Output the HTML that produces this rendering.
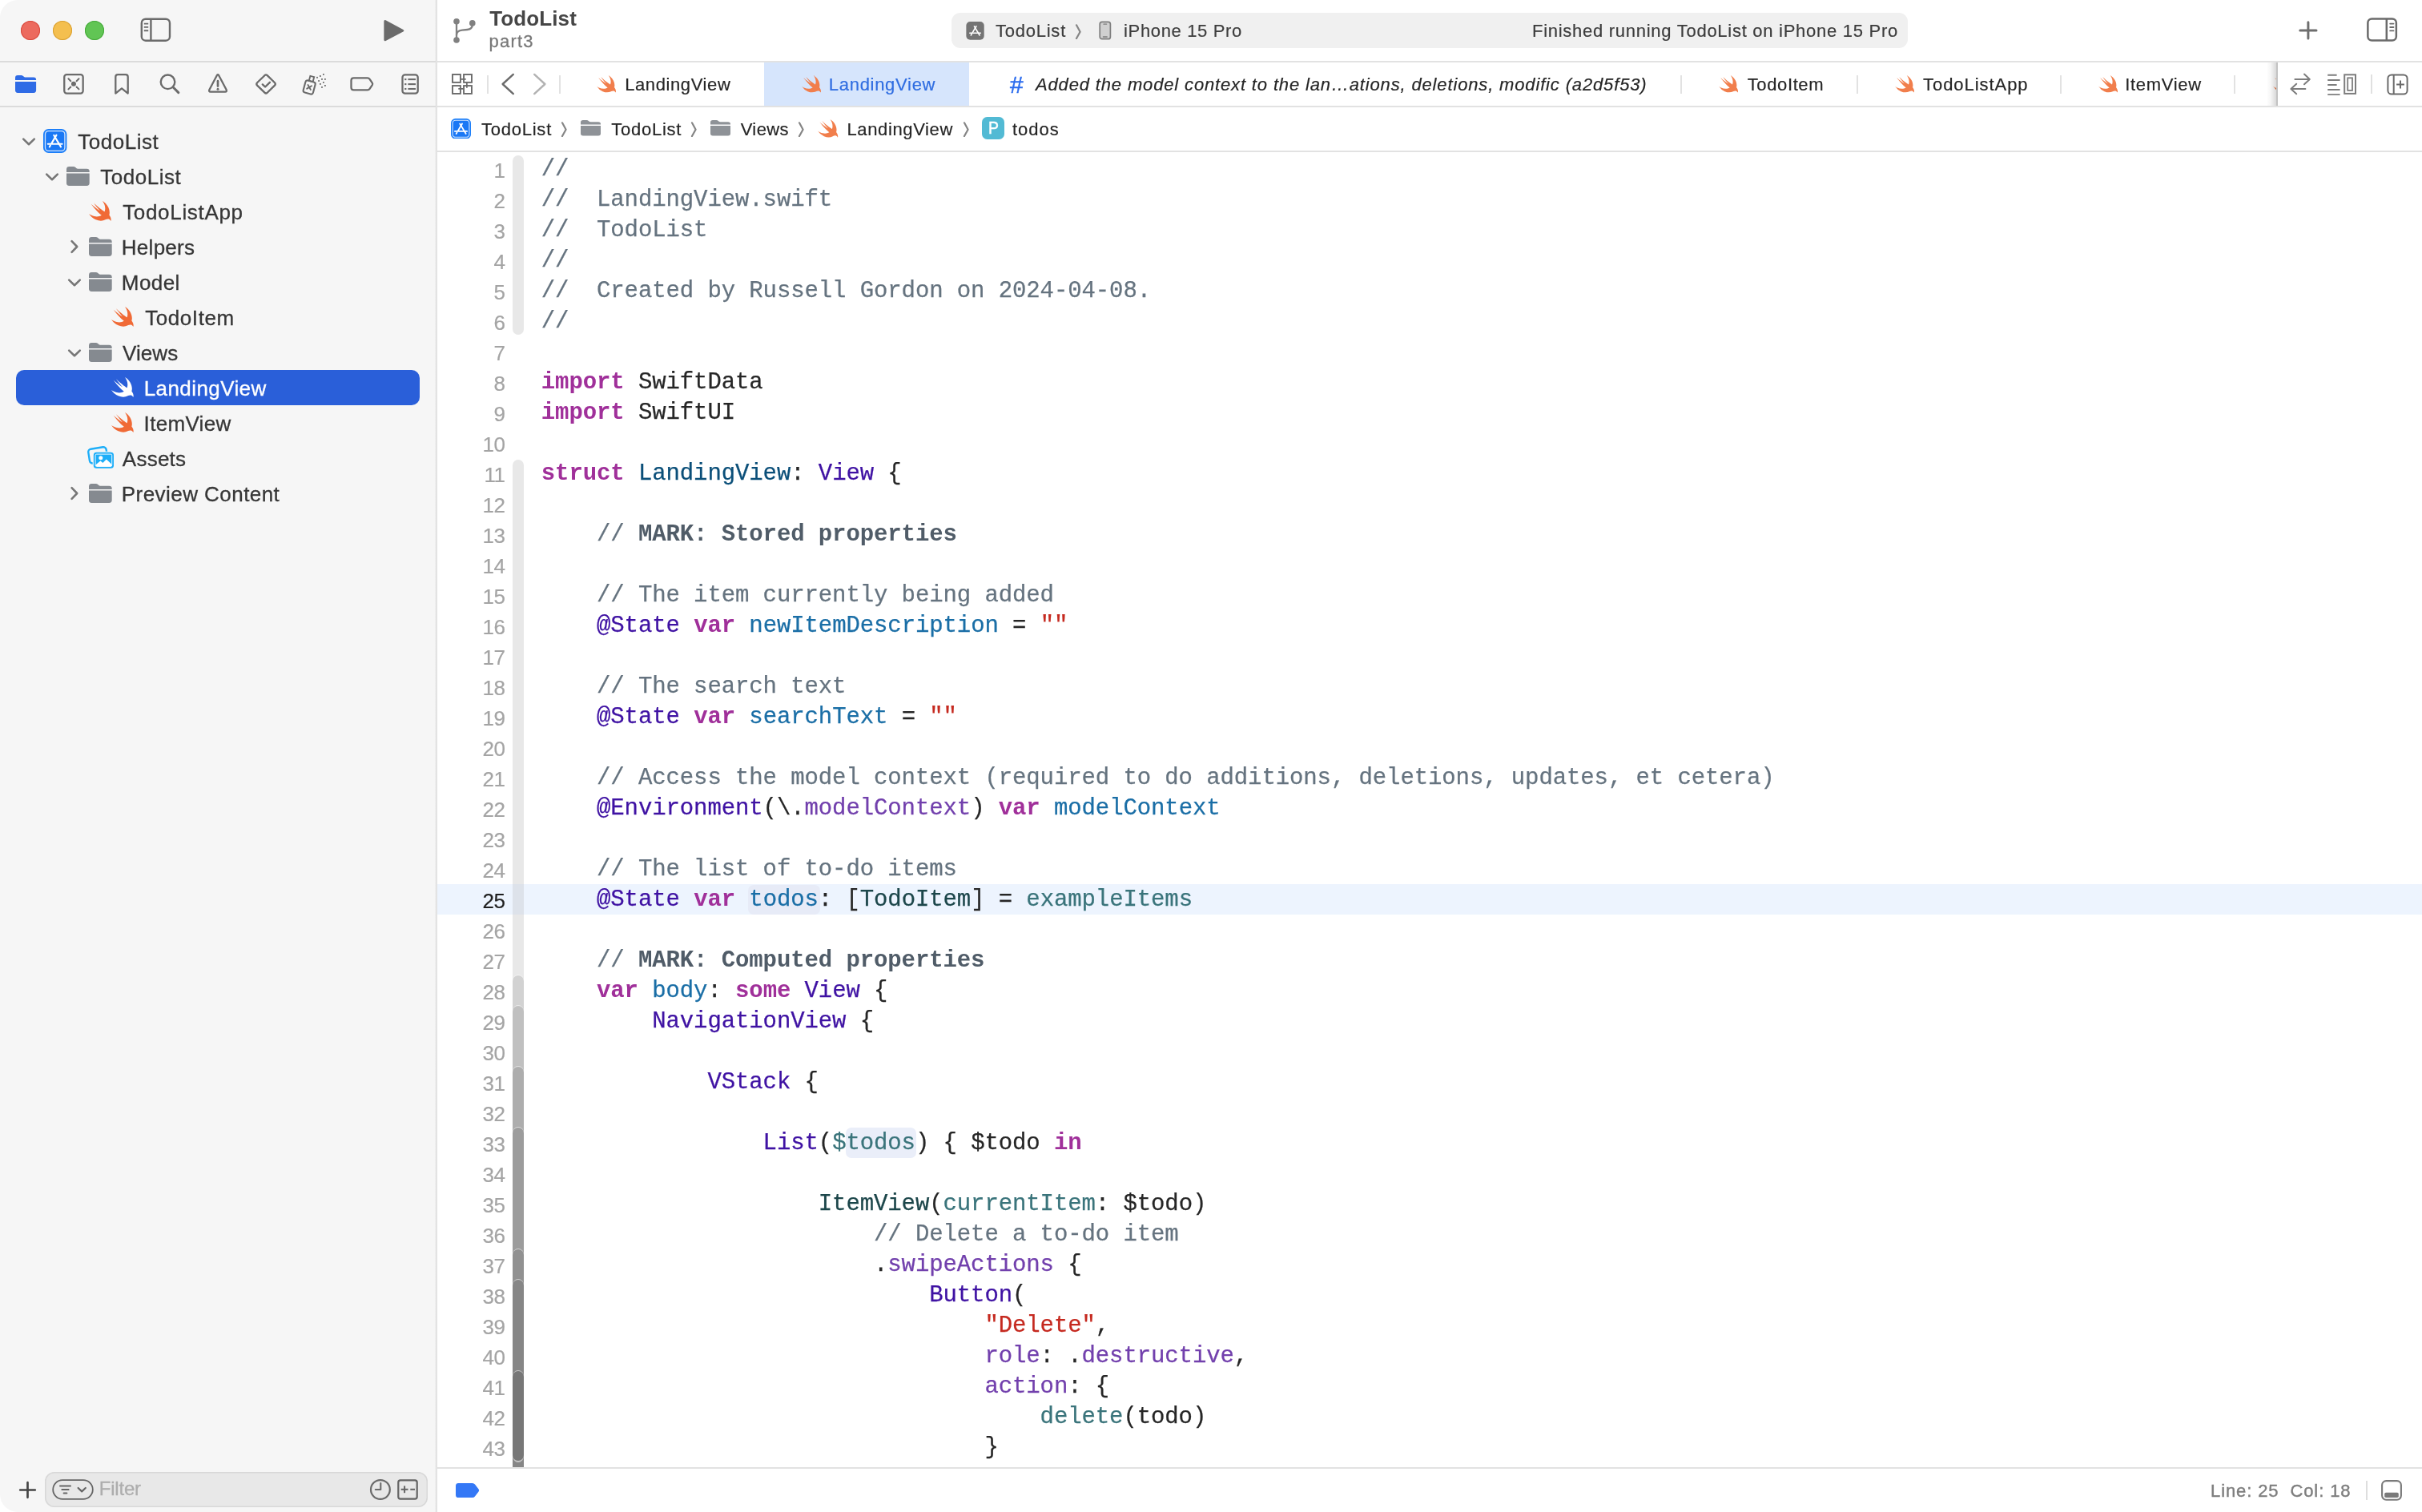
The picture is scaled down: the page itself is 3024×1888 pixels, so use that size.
<!DOCTYPE html>
<html lang="en"><head><meta charset="utf-8"><title>TodoList — LandingView.swift</title>
<style>
html,body{margin:0;padding:0;background:#fff;}
body{width:3024px;height:1888px;overflow:hidden;position:relative;font-family:"Liberation Sans",Arial,sans-serif;}
#win{will-change:transform;position:absolute;left:0;top:0;width:3024px;height:1888px;border-radius:22px;overflow:hidden;background:#fff;}
.b{position:absolute;display:block;}
.t{position:absolute;white-space:pre;}
.code{position:absolute;left:675.8px;white-space:pre;font-family:"Liberation Mono","DejaVu Sans Mono",monospace;font-size:29px;line-height:38px;height:38px;letter-spacing:-0.103px;color:#262626;-webkit-text-stroke:0.25px;}
.ln{position:absolute;left:546px;width:84.4px;text-align:right;font-size:26px;letter-spacing:-0.55px;line-height:38px;height:38px;color:#a4a4a4;-webkit-text-stroke:0.2px;}
.c{color:#65737f}.k{color:#a0309a;font-weight:bold;-webkit-text-stroke:0}.s{color:#c5291f}.td{color:#0b4f79}.d{color:#1a6ea6}
.pt{color:#1c464a}.pf{color:#3a747b}.st{color:#3f12a3}.sf{color:#7240ad}.m{color:#505c68;font-weight:bold;-webkit-text-stroke:0}
</style></head><body><div id="win">

<div class="b" style="left:0px;top:0px;width:544px;height:1888px;background:#f6f6f6;"></div>
<div class="b" style="left:543px;top:0px;width:3px;height:1888px;background:linear-gradient(to right,#f3f3f3 0%,#e6e6e6 45%,#dddddd 100%);"></div>
<div class="b" style="left:0px;top:76px;width:543.6px;height:2px;background:#dbdbdb;"></div>
<div class="b" style="left:0px;top:132px;width:543.6px;height:2px;background:#dbdbdb;"></div>
<div class="b" style="left:546px;top:76px;width:2478px;height:2px;background:#e2e2e2;"></div>
<div class="b" style="left:546px;top:132px;width:2478px;height:2px;background:#e2e2e2;"></div>
<div class="b" style="left:546px;top:188px;width:2478px;height:2px;background:#e2e2e2;"></div>
<div class="b" style="left:546px;top:1832px;width:2478px;height:2px;background:#e2e2e2;"></div>
<div class="b" style="left:26px;top:26px;width:24px;height:24px;background:#ec6a5e;border-radius:50%;box-shadow:inset 0 0 0 1px #d8493d;"></div>
<div class="b" style="left:66px;top:26px;width:24px;height:24px;background:#f4bf4f;border-radius:50%;box-shadow:inset 0 0 0 1px #d9a033;"></div>
<div class="b" style="left:106px;top:26px;width:24px;height:24px;background:#61c554;border-radius:50%;box-shadow:inset 0 0 0 1px #45a93a;"></div>
<svg class="b" style="left:173px;top:20px;" width="43" height="34" viewBox="173 20 43 34"><rect x="176.8" y="23.7" width="35.2" height="27" rx="5" fill="none" stroke="#6b6b6b" stroke-width="2.4"/>
<line x1="188.4" y1="23.7" x2="188.4" y2="50.7" stroke="#6b6b6b" stroke-width="2.4"/>
<g stroke="#6b6b6b" stroke-width="1.9" stroke-linecap="butt"><line x1="179.8" y1="29.6" x2="185.2" y2="29.6"/><line x1="179.8" y1="33.9" x2="185.2" y2="33.9"/><line x1="179.8" y1="38.2" x2="185.2" y2="38.2"/></g></svg>
<svg class="b" style="left:476px;top:21px;" width="32" height="34" viewBox="476 21 32 34"><path d="M481.6 25.2 L503.4 36.9 Q505.4 38.15 503.4 39.4 L481.6 51.1 Q479.4 52 479.4 49.6 L479.4 26.7 Q479.4 24.3 481.6 25.2 Z" fill="#6b6b6b"/></svg>
<svg class="b" style="left:17px;top:92px;" width="31" height="26" viewBox="17 92 31 26"><path d="M19 97.2 Q19 94.1 22.1 94.1 L26.4 94.1 Q27.8 94.1 28.9 95 L30.2 96 Q30.9 96.5 32 96.5 L42 96.5 Q45.1 96.5 45.1 99.5 L45.1 100 L19 100 Z" fill="#2f6be6"/>
<path d="M19 102 L45.1 102 L45.1 112.8 Q45.1 115.9 42 115.9 L22.1 115.9 Q19 115.9 19 112.8 Z" fill="#2f6be6"/></svg>
<svg class="b" style="left:77px;top:90px;" width="30" height="30" viewBox="77 90 30 30"><rect x="80.25" y="93.15" width="23.4" height="23.4" rx="3" fill="none" stroke="#6b6b6b" stroke-width="2.3"/>
<g stroke="#6b6b6b" stroke-width="2" stroke-linecap="round"><line x1="85.4" y1="98.3" x2="88.3" y2="101.2"/><line x1="98.5" y1="98.3" x2="95.6" y2="101.2"/><line x1="85.4" y1="111.4" x2="88.3" y2="108.5"/><line x1="98.5" y1="111.4" x2="95.6" y2="108.5"/></g>
<circle cx="91.95" cy="104.85" r="3" fill="#6b6b6b"/></svg>
<svg class="b" style="left:141px;top:90px;" width="22" height="30" viewBox="141 90 22 30"><path d="M144.3 116.6 L144.3 96 Q144.3 93.2 147.1 93.2 L156.9 93.2 Q159.7 93.2 159.7 96 L159.7 116.6 L152 110.4 Z" fill="none" stroke="#6b6b6b" stroke-width="2.3" stroke-linejoin="round"/></svg>
<svg class="b" style="left:197px;top:90px;" width="30" height="30" viewBox="197 90 30 30"><circle cx="209.5" cy="102.3" r="8.8" fill="none" stroke="#6b6b6b" stroke-width="2.4"/><line x1="216.2" y1="109" x2="222.8" y2="115.6" stroke="#6b6b6b" stroke-width="3" stroke-linecap="round"/></svg>
<svg class="b" style="left:257px;top:89px;" width="30" height="30" viewBox="257 89 30 30"><path d="M270.9 94 Q272 92.2 273.1 94 L282.6 112 Q283.6 114.7 281.2 114.7 L262.8 114.7 Q260.4 114.7 261.4 112 Z" fill="none" stroke="#6b6b6b" stroke-width="2.3" stroke-linejoin="round"/>
<line x1="272" y1="101.2" x2="272" y2="107.6" stroke="#6b6b6b" stroke-width="2.7" stroke-linecap="round"/><circle cx="272" cy="111.3" r="1.5" fill="#6b6b6b"/></svg>
<svg class="b" style="left:316px;top:89px;" width="32" height="32" viewBox="316 89 32 32"><path d="M330.4 94.2 Q332.05 92.6 333.7 94.2 L343 103.3 Q344.6 104.95 343 106.6 L333.7 115.7 Q332.05 117.3 330.4 115.7 L321.1 106.6 Q319.5 104.95 321.1 103.3 Z" fill="none" stroke="#6b6b6b" stroke-width="2.3" stroke-linejoin="round"/>
<path d="M327.8 105.4 L331.1 108.5 L336.9 102.8" fill="none" stroke="#6b6b6b" stroke-width="2.4" stroke-linecap="round" stroke-linejoin="round"/></svg>
<svg class="b" style="left:374px;top:88px;" width="36" height="34" viewBox="374 88 36 34"><g transform="rotate(15 386.2 108.9)"><rect x="379.9" y="101.2" width="12.6" height="15.6" rx="2.6" fill="none" stroke="#6b6b6b" stroke-width="2.1"/>
<rect x="383.7" y="95.0" width="5" height="6.2" fill="none" stroke="#6b6b6b" stroke-width="1.9"/>
<g stroke="#6b6b6b" stroke-width="1.9" stroke-linecap="round"><line x1="383.8" y1="106.6" x2="388.6" y2="111.4"/><line x1="388.6" y1="106.6" x2="383.8" y2="111.4"/></g></g><rect x="403.0" y="92.0" width="1.8" height="1.8" fill="#6b6b6b"/><rect x="399.0" y="94.1" width="1.8" height="1.8" fill="#6b6b6b"/><rect x="395.1" y="95.9" width="1.8" height="1.8" fill="#6b6b6b"/><rect x="401.1" y="98.0" width="1.8" height="1.8" fill="#6b6b6b"/><rect x="405.0" y="98.0" width="1.8" height="1.8" fill="#6b6b6b"/><rect x="397.2" y="100.1" width="1.8" height="1.8" fill="#6b6b6b"/><rect x="403.0" y="102.0" width="1.8" height="1.8" fill="#6b6b6b"/><rect x="399.0" y="104.0" width="1.8" height="1.8" fill="#6b6b6b"/><rect x="405.0" y="106.0" width="1.8" height="1.8" fill="#6b6b6b"/><rect x="401.1" y="108.0" width="1.8" height="1.8" fill="#6b6b6b"/></svg>
<svg class="b" style="left:434px;top:93px;" width="36" height="24" viewBox="434 93 36 24"><path d="M441.6 97.4 L458.8 97.4 Q460.6 97.4 461.6 98.9 L464.8 103.6 Q465.6 104.85 464.8 106.1 L461.6 110.8 Q460.6 112.3 458.8 112.3 L441.6 112.3 Q438.5 112.3 438.5 109.2 L438.5 100.5 Q438.5 97.4 441.6 97.4 Z" fill="none" stroke="#6b6b6b" stroke-width="2.3" stroke-linejoin="round"/></svg>
<svg class="b" style="left:498px;top:89px;" width="28" height="32" viewBox="498 89 28 32"><rect x="502.5" y="93.3" width="19.2" height="23.3" rx="3.2" fill="none" stroke="#6b6b6b" stroke-width="2.3"/>
<g stroke="#6b6b6b" stroke-width="2.1"><line x1="509.4" y1="99.1" x2="519" y2="99.1"/><line x1="509.4" y1="105.1" x2="519" y2="105.1"/><line x1="509.4" y1="111" x2="519" y2="111"/></g>
<g fill="#6b6b6b"><rect x="505.2" y="98.05" width="2.2" height="2.1"/><rect x="505.2" y="104.05" width="2.2" height="2.1"/><rect x="505.2" y="109.95" width="2.2" height="2.1"/></g></svg>
<svg class="b" style="left:27.0px;top:171px;" width="18" height="12" viewBox="0 0 18 12"><path d="M2.2 2.6 L9 9.2 L15.8 2.6" fill="none" stroke="#777" stroke-width="2.6" stroke-linecap="round" stroke-linejoin="round"/></svg>
<svg class="b" style="left:54.4px;top:161.00px;" width="29.4" height="30.0" viewBox="0 0 29.4 30"><rect x="0" y="0" width="29.4" height="30" rx="6.6" fill="#1d7ff9"/>
<rect x="2.5" y="2.6" width="24.4" height="24.8" rx="4.2" fill="#1a78f5" stroke="#fff" stroke-opacity="0.8" stroke-width="1.3"/>
<g stroke="#fff" stroke-width="2.1" stroke-linecap="round" fill="none"><line x1="13.2" y1="7.8" x2="22" y2="22.4"/><line x1="16.5" y1="7.6" x2="10.6" y2="17.6"/><line x1="8.9" y1="20.4" x2="7.8" y2="22.4"/><line x1="5.8" y1="18.7" x2="23.6" y2="18.7"/></g></svg>
<div class="t " style="left:97.20px;top:163.99px;font-size:26px;line-height:26px;color:#363636;letter-spacing:0.520px;-webkit-text-stroke:0.3px #363636;">TodoList</div>
<svg class="b" style="left:55.7px;top:215px;" width="18" height="12" viewBox="0 0 18 12"><path d="M2.2 2.6 L9 9.2 L15.8 2.6" fill="none" stroke="#777" stroke-width="2.6" stroke-linecap="round" stroke-linejoin="round"/></svg>
<svg class="b" style="left:83.2px;top:208.00px;" width="28.7" height="24.0" viewBox="0 0 28.7 24" preserveAspectRatio="none"><path d="M0 3.4 Q0 0 3.4 0 L8.6 0 Q10.2 0 11.3 1.1 L12.3 2.1 Q13 2.7 14.2 2.7 L25.3 2.7 Q28.7 2.7 28.7 6 L28.7 6.9 L0 6.9 Z" fill="#858a90"/>
<path d="M0 8.6 L28.7 8.6 L28.7 20.6 Q28.7 24 25.3 24 L3.4 24 Q0 24 0 20.6 Z" fill="#858a90"/></svg>
<div class="t " style="left:125.20px;top:207.99px;font-size:26px;line-height:26px;color:#363636;letter-spacing:0.520px;-webkit-text-stroke:0.3px #363636;">TodoList</div>
<svg class="b" style="left:110.9px;top:250.5px;" width="28.0" height="25.3" viewBox="2.35 3.35 18.4 16.6"><path d="M13.543 3.41c4.114 2.47 6.545 7.162 5.549 11.131-.024.093-.05.181-.076.272l.002.001c2.062 2.538 1.5 5.258 1.236 4.745-1.072-2.086-3.066-1.568-4.088-1.043a6.803 6.803 0 0 1-.281.158l-.02.012-.002.002c-2.115 1.123-4.957 1.205-7.812-.022a12.568 12.568 0 0 1-5.64-4.838c.649.48 1.35.902 2.097 1.252 3.019 1.414 6.051 1.311 8.197-.002C9.651 12.73 7.101 9.67 5.146 7.191a10.628 10.628 0 0 1-1.005-1.384c2.34 2.142 6.038 4.83 7.365 5.576C8.69 8.408 6.208 4.743 6.324 4.86c4.436 4.47 8.528 6.996 8.528 6.996.154.085.27.154.36.213.085-.215.16-.437.224-.668.708-2.588-.09-5.548-1.893-7.992z" fill="#f06a36" opacity="1"/></svg>
<div class="t " style="left:153.20px;top:251.99px;font-size:26px;line-height:26px;color:#363636;letter-spacing:0.672px;-webkit-text-stroke:0.3px #363636;">TodoListApp</div>
<svg class="b" style="left:87.4px;top:299px;" width="12" height="18" viewBox="0 0 12 18"><path d="M2.6 2.2 L9.2 9 L2.6 15.8" fill="none" stroke="#777" stroke-width="2.6" stroke-linecap="round" stroke-linejoin="round"/></svg>
<svg class="b" style="left:111.2px;top:296.00px;" width="28.7" height="24.0" viewBox="0 0 28.7 24" preserveAspectRatio="none"><path d="M0 3.4 Q0 0 3.4 0 L8.6 0 Q10.2 0 11.3 1.1 L12.3 2.1 Q13 2.7 14.2 2.7 L25.3 2.7 Q28.7 2.7 28.7 6 L28.7 6.9 L0 6.9 Z" fill="#858a90"/>
<path d="M0 8.6 L28.7 8.6 L28.7 20.6 Q28.7 24 25.3 24 L3.4 24 Q0 24 0 20.6 Z" fill="#858a90"/></svg>
<div class="t " style="left:151.80px;top:295.99px;font-size:26px;line-height:26px;color:#363636;letter-spacing:0.272px;-webkit-text-stroke:0.3px #363636;">Helpers</div>
<svg class="b" style="left:84.4px;top:347px;" width="18" height="12" viewBox="0 0 18 12"><path d="M2.2 2.6 L9 9.2 L15.8 2.6" fill="none" stroke="#777" stroke-width="2.6" stroke-linecap="round" stroke-linejoin="round"/></svg>
<svg class="b" style="left:111.2px;top:340.00px;" width="28.7" height="24.0" viewBox="0 0 28.7 24" preserveAspectRatio="none"><path d="M0 3.4 Q0 0 3.4 0 L8.6 0 Q10.2 0 11.3 1.1 L12.3 2.1 Q13 2.7 14.2 2.7 L25.3 2.7 Q28.7 2.7 28.7 6 L28.7 6.9 L0 6.9 Z" fill="#858a90"/>
<path d="M0 8.6 L28.7 8.6 L28.7 20.6 Q28.7 24 25.3 24 L3.4 24 Q0 24 0 20.6 Z" fill="#858a90"/></svg>
<div class="t " style="left:151.80px;top:339.99px;font-size:26px;line-height:26px;color:#363636;letter-spacing:0.437px;-webkit-text-stroke:0.3px #363636;">Model</div>
<svg class="b" style="left:138.9px;top:382.5px;" width="28.0" height="25.3" viewBox="2.35 3.35 18.4 16.6"><path d="M13.543 3.41c4.114 2.47 6.545 7.162 5.549 11.131-.024.093-.05.181-.076.272l.002.001c2.062 2.538 1.5 5.258 1.236 4.745-1.072-2.086-3.066-1.568-4.088-1.043a6.803 6.803 0 0 1-.281.158l-.02.012-.002.002c-2.115 1.123-4.957 1.205-7.812-.022a12.568 12.568 0 0 1-5.64-4.838c.649.48 1.35.902 2.097 1.252 3.019 1.414 6.051 1.311 8.197-.002C9.651 12.73 7.101 9.67 5.146 7.191a10.628 10.628 0 0 1-1.005-1.384c2.34 2.142 6.038 4.83 7.365 5.576C8.69 8.408 6.208 4.743 6.324 4.86c4.436 4.47 8.528 6.996 8.528 6.996.154.085.27.154.36.213.085-.215.16-.437.224-.668.708-2.588-.09-5.548-1.893-7.992z" fill="#f06a36" opacity="1"/></svg>
<div class="t " style="left:181.20px;top:383.99px;font-size:26px;line-height:26px;color:#363636;letter-spacing:0.569px;-webkit-text-stroke:0.3px #363636;">TodoItem</div>
<svg class="b" style="left:84.4px;top:435px;" width="18" height="12" viewBox="0 0 18 12"><path d="M2.2 2.6 L9 9.2 L15.8 2.6" fill="none" stroke="#777" stroke-width="2.6" stroke-linecap="round" stroke-linejoin="round"/></svg>
<svg class="b" style="left:111.2px;top:428.00px;" width="28.7" height="24.0" viewBox="0 0 28.7 24" preserveAspectRatio="none"><path d="M0 3.4 Q0 0 3.4 0 L8.6 0 Q10.2 0 11.3 1.1 L12.3 2.1 Q13 2.7 14.2 2.7 L25.3 2.7 Q28.7 2.7 28.7 6 L28.7 6.9 L0 6.9 Z" fill="#858a90"/>
<path d="M0 8.6 L28.7 8.6 L28.7 20.6 Q28.7 24 25.3 24 L3.4 24 Q0 24 0 20.6 Z" fill="#858a90"/></svg>
<div class="t " style="left:152.90px;top:427.99px;font-size:26px;line-height:26px;color:#363636;letter-spacing:0.122px;-webkit-text-stroke:0.3px #363636;">Views</div>
<div class="b" style="left:20px;top:462px;width:504px;height:44px;background:#2a5fd9;border-radius:10px;"></div>
<svg class="b" style="left:138.9px;top:470.5px;" width="28.0" height="25.3" viewBox="2.35 3.35 18.4 16.6"><path d="M13.543 3.41c4.114 2.47 6.545 7.162 5.549 11.131-.024.093-.05.181-.076.272l.002.001c2.062 2.538 1.5 5.258 1.236 4.745-1.072-2.086-3.066-1.568-4.088-1.043a6.803 6.803 0 0 1-.281.158l-.02.012-.002.002c-2.115 1.123-4.957 1.205-7.812-.022a12.568 12.568 0 0 1-5.64-4.838c.649.48 1.35.902 2.097 1.252 3.019 1.414 6.051 1.311 8.197-.002C9.651 12.73 7.101 9.67 5.146 7.191a10.628 10.628 0 0 1-1.005-1.384c2.34 2.142 6.038 4.83 7.365 5.576C8.69 8.408 6.208 4.743 6.324 4.86c4.436 4.47 8.528 6.996 8.528 6.996.154.085.27.154.36.213.085-.215.16-.437.224-.668.708-2.588-.09-5.548-1.893-7.992z" fill="#fff" opacity="1"/></svg>
<div class="t " style="left:179.70px;top:471.99px;font-size:26px;line-height:26px;color:#fff;letter-spacing:0.416px;-webkit-text-stroke:0.3px #fff;">LandingView</div>
<svg class="b" style="left:138.9px;top:514.5px;" width="28.0" height="25.3" viewBox="2.35 3.35 18.4 16.6"><path d="M13.543 3.41c4.114 2.47 6.545 7.162 5.549 11.131-.024.093-.05.181-.076.272l.002.001c2.062 2.538 1.5 5.258 1.236 4.745-1.072-2.086-3.066-1.568-4.088-1.043a6.803 6.803 0 0 1-.281.158l-.02.012-.002.002c-2.115 1.123-4.957 1.205-7.812-.022a12.568 12.568 0 0 1-5.64-4.838c.649.48 1.35.902 2.097 1.252 3.019 1.414 6.051 1.311 8.197-.002C9.651 12.73 7.101 9.67 5.146 7.191a10.628 10.628 0 0 1-1.005-1.384c2.34 2.142 6.038 4.83 7.365 5.576C8.69 8.408 6.208 4.743 6.324 4.86c4.436 4.47 8.528 6.996 8.528 6.996.154.085.27.154.36.213.085-.215.16-.437.224-.668.708-2.588-.09-5.548-1.893-7.992z" fill="#f06a36" opacity="1"/></svg>
<div class="t " style="left:179.60px;top:515.99px;font-size:26px;line-height:26px;color:#363636;letter-spacing:0.318px;-webkit-text-stroke:0.3px #363636;">ItemView</div>
<svg class="b" style="left:106px;top:554px;" width="40" height="34" viewBox="106 554 40 34"><rect x="111" y="559.4" width="22.6" height="18" rx="3.6" fill="none" stroke="#1eaef8" stroke-width="2.4" transform="rotate(-9 122.3 568.4)"/>
<rect x="115.7" y="563.7" width="27.4" height="22.2" rx="4.4" fill="#f6f6f6"/>
<rect x="116.8" y="564.8" width="25.2" height="20" rx="3.6" fill="#1eaef8"/>
<rect x="119.1" y="567.1" width="20.6" height="15.4" rx="1.6" fill="none" stroke="#fff" stroke-opacity="0.9" stroke-width="1"/>
<circle cx="125.8" cy="571.8" r="2.5" fill="#fff"/><path d="M119.6 582 L119.6 580.2 L125.4 575.6 L128.4 578 L132.8 573.4 L139.2 579.4 L139.2 582 Z" fill="#fff"/></svg>
<div class="t " style="left:152.80px;top:559.99px;font-size:26px;line-height:26px;color:#363636;letter-spacing:0.246px;-webkit-text-stroke:0.3px #363636;">Assets</div>
<svg class="b" style="left:87.4px;top:607px;" width="12" height="18" viewBox="0 0 12 18"><path d="M2.6 2.2 L9.2 9 L2.6 15.8" fill="none" stroke="#777" stroke-width="2.6" stroke-linecap="round" stroke-linejoin="round"/></svg>
<svg class="b" style="left:111.2px;top:604.00px;" width="28.7" height="24.0" viewBox="0 0 28.7 24" preserveAspectRatio="none"><path d="M0 3.4 Q0 0 3.4 0 L8.6 0 Q10.2 0 11.3 1.1 L12.3 2.1 Q13 2.7 14.2 2.7 L25.3 2.7 Q28.7 2.7 28.7 6 L28.7 6.9 L0 6.9 Z" fill="#858a90"/>
<path d="M0 8.6 L28.7 8.6 L28.7 20.6 Q28.7 24 25.3 24 L3.4 24 Q0 24 0 20.6 Z" fill="#858a90"/></svg>
<div class="t " style="left:151.80px;top:603.99px;font-size:26px;line-height:26px;color:#363636;letter-spacing:0.449px;-webkit-text-stroke:0.3px #363636;">Preview Content</div>
<svg class="b" style="left:22px;top:1848px;" width="25" height="25" viewBox="0 0 25 25"><path d="M12.5 3.2 L12.5 21.8 M3.2 12.5 L21.8 12.5" stroke="#454545" stroke-width="2.7" stroke-linecap="round"/></svg>
<div class="b" style="left:56px;top:1838px;width:477.5px;height:44px;background:#e8e8e8;border-radius:12px;box-shadow:inset 0 0 0 1.5px #d8d8d8;"></div>
<svg class="b" style="left:65px;top:1847px;" width="52" height="26" viewBox="0 0 52 26"><rect x="1.2" y="1.2" width="49.6" height="23.6" rx="11.8" fill="none" stroke="#666" stroke-width="1.8"/>
<g stroke="#666" stroke-width="2" stroke-linecap="round"><line x1="10" y1="8.4" x2="23" y2="8.4"/><line x1="12.4" y1="13" x2="20.6" y2="13"/><line x1="14.6" y1="17.6" x2="18.4" y2="17.6"/></g>
<path d="M32.6 11 L37.2 15.4 L41.8 11" fill="none" stroke="#666" stroke-width="2.2" stroke-linecap="round" stroke-linejoin="round"/></svg>
<div class="t " style="left:123.80px;top:1847.48px;font-size:24px;line-height:24px;color:#adadad;letter-spacing:-0.222px;-webkit-text-stroke:0.3px #adadad;">Filter</div>
<svg class="b" style="left:460px;top:1845px;" width="30" height="30" viewBox="460 1845 30 30"><circle cx="474.9" cy="1860" r="11.9" fill="none" stroke="#6a6a6a" stroke-width="2.2"/><path d="M475.3 1852 L475.3 1860 L468.8 1860" fill="none" stroke="#6a6a6a" stroke-width="2.1" stroke-linecap="round" stroke-linejoin="round"/></svg>
<svg class="b" style="left:494px;top:1845px;" width="30" height="30" viewBox="494 1845 30 30"><rect x="497.3" y="1848.3" width="23.4" height="23.4" rx="2.6" fill="none" stroke="#636363" stroke-width="2.2"/>
<g stroke="#636363" stroke-width="2" stroke-linecap="butt"><line x1="500.7" y1="1859.8" x2="509.5" y2="1859.8"/><line x1="505.1" y1="1855.4" x2="505.1" y2="1864.2"/><line x1="512.3" y1="1859.8" x2="518" y2="1859.8"/></g></svg>
<svg class="b" style="left:560px;top:20px;" width="40" height="40" viewBox="560 20 40 40"><g fill="none" stroke="#808080" stroke-width="2.3" stroke-linecap="round"><path d="M570 27 L570 49.5"/><path d="M589.8 29 L589.8 30.5 Q589.8 36.4 583.5 37 L577 37.7 Q570 38.6 570 43.5"/></g>
<circle cx="570" cy="26.8" r="3.8" fill="#808080"/><circle cx="570" cy="50" r="3.8" fill="#808080"/><circle cx="589.8" cy="28.9" r="3.8" fill="#808080"/></svg>
<div class="t " style="left:611.30px;top:10.39px;font-size:26px;line-height:26px;color:#464646;letter-spacing:0.097px;font-weight:bold;">TodoList</div>
<div class="t " style="left:610.60px;top:40.98px;font-size:22px;line-height:22px;color:#787878;letter-spacing:1.171px;-webkit-text-stroke:0.3px #787878;">part3</div>
<div class="b" style="left:1188px;top:16px;width:1194px;height:44px;background:#f0f0f0;border-radius:11px;"></div>
<svg class="b" style="left:1205.9px;top:26.8px;" width="23.1" height="22.8" viewBox="0 0 29.4 30"><rect x="0" y="0" width="29.4" height="30" rx="6.4" fill="#747474"/>
<g stroke="#fff" stroke-width="2.1" stroke-linecap="round" fill="none"><line x1="13.2" y1="7.8" x2="22" y2="22.4"/><line x1="16.5" y1="7.6" x2="10.6" y2="17.6"/><line x1="8.9" y1="20.4" x2="7.8" y2="22.4"/><line x1="5.8" y1="18.7" x2="23.6" y2="18.7"/></g></svg>
<div class="t " style="left:1243.00px;top:27.98px;font-size:22px;line-height:22px;color:#3e3e3e;letter-spacing:0.757px;-webkit-text-stroke:0.2px #3e3e3e;">TodoList</div>
<svg class="b" style="left:1342px;top:29.900000000000002px;" width="9" height="19.4" viewBox="0 0 9 19.4"><path d="M2 1.3 L6.6 9.7 L2 18.099999999999998" fill="none" stroke="#858585" stroke-width="2.2" stroke-linecap="round" stroke-linejoin="round"/></svg>
<svg class="b" style="left:1372px;top:26px;" width="16" height="24" viewBox="0 0 16 24"><rect x="1.2" y="1.3" width="13.2" height="21.4" rx="2.8" fill="#d0d0d0" stroke="#7e7e7e" stroke-width="1.7"/><line x1="6" y1="4.2" x2="9.6" y2="4.2" stroke="#7e7e7e" stroke-width="1.3" stroke-linecap="round"/><line x1="5.4" y1="20" x2="10.2" y2="20" stroke="#7e7e7e" stroke-width="1.3" stroke-linecap="round"/></svg>
<div class="t " style="left:1403.00px;top:27.98px;font-size:22px;line-height:22px;color:#3e3e3e;letter-spacing:0.659px;-webkit-text-stroke:0.2px #3e3e3e;">iPhone 15 Pro</div>
<div class="t " style="left:1913.00px;top:27.98px;font-size:22px;line-height:22px;color:#3c3c3c;letter-spacing:0.727px;-webkit-text-stroke:0.2px #3c3c3c;">Finished running TodoList on iPhone 15 Pro</div>
<svg class="b" style="left:2866px;top:22px;" width="32" height="32" viewBox="2866 22 32 32"><path d="M2881.9 27.8 L2881.9 48.1 M2871.8 38 L2892 38" stroke="#6e6e6e" stroke-width="3" stroke-linecap="round"/></svg>
<svg class="b" style="left:2952px;top:19px;" width="44" height="36" viewBox="2952 19 44 36"><rect x="2956.35" y="23.45" width="35.5" height="27.1" rx="5" fill="none" stroke="#6b6b6b" stroke-width="2.5"/>
<line x1="2979.8" y1="23.4" x2="2979.8" y2="50.6" stroke="#6b6b6b" stroke-width="2.5"/>
<g stroke="#6b6b6b" stroke-width="1.9" stroke-linecap="round"><line x1="2984.2" y1="29.6" x2="2988.4" y2="29.6"/><line x1="2984.2" y1="34" x2="2988.4" y2="34"/><line x1="2984.2" y1="38.4" x2="2988.4" y2="38.4"/></g></svg>
<svg class="b" style="left:562px;top:90px;" width="30" height="30" viewBox="562 90 30 30"><g fill="none" stroke="#6b6b6b" stroke-width="1.9"><rect x="565" y="93" width="9.9" height="9.9"/><rect x="579.05" y="93" width="9.9" height="9.9"/><rect x="565" y="107.05" width="9.9" height="9.9"/><rect x="579.05" y="107.05" width="9.9" height="9.9"/></g>
<g fill="none" stroke="#6b6b6b" stroke-width="1.7"><path d="M575.4 98.9 L581.7 98.9 M582.9 103.2 L582.9 109.7 M572.3 110.9 L578.5 110.9"/></g></svg>
<div class="b" style="left:608px;top:93.5px;width:2px;height:23px;background:#e2e2e2;"></div>
<svg class="b" style="left:622px;top:88px;" width="24" height="34" viewBox="622 88 24 34"><path d="M640.8 92.9 L627.6 105 L640.8 117.1" fill="none" stroke="#6b6b6b" stroke-width="2.4" stroke-linecap="round" stroke-linejoin="round"/></svg>
<svg class="b" style="left:662px;top:88px;" width="24" height="34" viewBox="662 88 24 34"><path d="M667.2 92.9 L680.4 105 L667.2 117.1" fill="none" stroke="#b2b2b2" stroke-width="2.4" stroke-linecap="round" stroke-linejoin="round"/></svg>
<div class="b" style="left:698px;top:93.5px;width:2px;height:23px;background:#e2e2e2;"></div>
<svg class="b" style="left:744.8px;top:94.4px;" width="24.3" height="21.9" viewBox="2.35 3.35 18.4 16.6"><path d="M13.543 3.41c4.114 2.47 6.545 7.162 5.549 11.131-.024.093-.05.181-.076.272l.002.001c2.062 2.538 1.5 5.258 1.236 4.745-1.072-2.086-3.066-1.568-4.088-1.043a6.803 6.803 0 0 1-.281.158l-.02.012-.002.002c-2.115 1.123-4.957 1.205-7.812-.022a12.568 12.568 0 0 1-5.64-4.838c.649.48 1.35.902 2.097 1.252 3.019 1.414 6.051 1.311 8.197-.002C9.651 12.73 7.101 9.67 5.146 7.191a10.628 10.628 0 0 1-1.005-1.384c2.34 2.142 6.038 4.83 7.365 5.576C8.69 8.408 6.208 4.743 6.324 4.86c4.436 4.47 8.528 6.996 8.528 6.996.154.085.27.154.36.213.085-.215.16-.437.224-.668.708-2.588-.09-5.548-1.893-7.992z" fill="#f17e4c" opacity="1"/></svg>
<div class="t " style="left:780.20px;top:94.58px;font-size:22px;line-height:22px;color:#262626;letter-spacing:0.601px;-webkit-text-stroke:0.2px #262626;">LandingView</div>
<div class="b" style="left:954px;top:78px;width:256px;height:54px;background:#d6e5fc;"></div>
<svg class="b" style="left:1001.4px;top:94.4px;" width="24.3" height="21.9" viewBox="2.35 3.35 18.4 16.6"><path d="M13.543 3.41c4.114 2.47 6.545 7.162 5.549 11.131-.024.093-.05.181-.076.272l.002.001c2.062 2.538 1.5 5.258 1.236 4.745-1.072-2.086-3.066-1.568-4.088-1.043a6.803 6.803 0 0 1-.281.158l-.02.012-.002.002c-2.115 1.123-4.957 1.205-7.812-.022a12.568 12.568 0 0 1-5.64-4.838c.649.48 1.35.902 2.097 1.252 3.019 1.414 6.051 1.311 8.197-.002C9.651 12.73 7.101 9.67 5.146 7.191a10.628 10.628 0 0 1-1.005-1.384c2.34 2.142 6.038 4.83 7.365 5.576C8.69 8.408 6.208 4.743 6.324 4.86c4.436 4.47 8.528 6.996 8.528 6.996.154.085.27.154.36.213.085-.215.16-.437.224-.668.708-2.588-.09-5.548-1.893-7.992z" fill="#f17e4c" opacity="1"/></svg>
<div class="t " style="left:1034.80px;top:94.58px;font-size:22px;line-height:22px;color:#2f6de1;letter-spacing:0.710px;-webkit-text-stroke:0.2px #2f6de1;">LandingView</div>
<div class="t " style="left:1260.40px;top:90.61px;font-size:30px;line-height:30px;color:#2b6cee;font-style:italic;-webkit-text-stroke:0.45px #2b6cee;">#</div>
<div class="t " style="left:1293.00px;top:94.58px;font-size:22px;line-height:22px;color:#262626;letter-spacing:0.849px;font-style:italic;-webkit-text-stroke:0.2px #262626;">Added the model context to the lan…ations, deletions, modific (a2d5f53)</div>
<div class="b" style="left:2097.5px;top:93.5px;width:2px;height:23px;background:#e2e2e2;"></div>
<svg class="b" style="left:2145.6px;top:94.4px;" width="24.3" height="21.9" viewBox="2.35 3.35 18.4 16.6"><path d="M13.543 3.41c4.114 2.47 6.545 7.162 5.549 11.131-.024.093-.05.181-.076.272l.002.001c2.062 2.538 1.5 5.258 1.236 4.745-1.072-2.086-3.066-1.568-4.088-1.043a6.803 6.803 0 0 1-.281.158l-.02.012-.002.002c-2.115 1.123-4.957 1.205-7.812-.022a12.568 12.568 0 0 1-5.64-4.838c.649.48 1.35.902 2.097 1.252 3.019 1.414 6.051 1.311 8.197-.002C9.651 12.73 7.101 9.67 5.146 7.191a10.628 10.628 0 0 1-1.005-1.384c2.34 2.142 6.038 4.83 7.365 5.576C8.69 8.408 6.208 4.743 6.324 4.86c4.436 4.47 8.528 6.996 8.528 6.996.154.085.27.154.36.213.085-.215.16-.437.224-.668.708-2.588-.09-5.548-1.893-7.992z" fill="#f17e4c" opacity="1"/></svg>
<div class="t " style="left:2181.70px;top:94.58px;font-size:22px;line-height:22px;color:#262626;letter-spacing:0.626px;-webkit-text-stroke:0.2px #262626;">TodoItem</div>
<div class="b" style="left:2317.5px;top:93.5px;width:2px;height:23px;background:#e2e2e2;"></div>
<svg class="b" style="left:2365.6px;top:94.4px;" width="24.3" height="21.9" viewBox="2.35 3.35 18.4 16.6"><path d="M13.543 3.41c4.114 2.47 6.545 7.162 5.549 11.131-.024.093-.05.181-.076.272l.002.001c2.062 2.538 1.5 5.258 1.236 4.745-1.072-2.086-3.066-1.568-4.088-1.043a6.803 6.803 0 0 1-.281.158l-.02.012-.002.002c-2.115 1.123-4.957 1.205-7.812-.022a12.568 12.568 0 0 1-5.64-4.838c.649.48 1.35.902 2.097 1.252 3.019 1.414 6.051 1.311 8.197-.002C9.651 12.73 7.101 9.67 5.146 7.191a10.628 10.628 0 0 1-1.005-1.384c2.34 2.142 6.038 4.83 7.365 5.576C8.69 8.408 6.208 4.743 6.324 4.86c4.436 4.47 8.528 6.996 8.528 6.996.154.085.27.154.36.213.085-.215.16-.437.224-.668.708-2.588-.09-5.548-1.893-7.992z" fill="#f17e4c" opacity="1"/></svg>
<div class="t " style="left:2401.00px;top:94.58px;font-size:22px;line-height:22px;color:#262626;letter-spacing:0.946px;-webkit-text-stroke:0.2px #262626;">TodoListApp</div>
<div class="b" style="left:2571.5px;top:93.5px;width:2px;height:23px;background:#e2e2e2;"></div>
<svg class="b" style="left:2619.8px;top:94.4px;" width="24.3" height="21.9" viewBox="2.35 3.35 18.4 16.6"><path d="M13.543 3.41c4.114 2.47 6.545 7.162 5.549 11.131-.024.093-.05.181-.076.272l.002.001c2.062 2.538 1.5 5.258 1.236 4.745-1.072-2.086-3.066-1.568-4.088-1.043a6.803 6.803 0 0 1-.281.158l-.02.012-.002.002c-2.115 1.123-4.957 1.205-7.812-.022a12.568 12.568 0 0 1-5.64-4.838c.649.48 1.35.902 2.097 1.252 3.019 1.414 6.051 1.311 8.197-.002C9.651 12.73 7.101 9.67 5.146 7.191a10.628 10.628 0 0 1-1.005-1.384c2.34 2.142 6.038 4.83 7.365 5.576C8.69 8.408 6.208 4.743 6.324 4.86c4.436 4.47 8.528 6.996 8.528 6.996.154.085.27.154.36.213.085-.215.16-.437.224-.668.708-2.588-.09-5.548-1.893-7.992z" fill="#f17e4c" opacity="1"/></svg>
<div class="t " style="left:2653.20px;top:94.58px;font-size:22px;line-height:22px;color:#262626;letter-spacing:0.690px;-webkit-text-stroke:0.2px #262626;">ItemView</div>
<div class="b" style="left:2789px;top:93.5px;width:2px;height:23px;background:#e2e2e2;"></div>
<svg class="b" style="left:2837.6px;top:94.4px;" width="24.3" height="21.9" viewBox="2.35 3.35 18.4 16.6"><path d="M13.543 3.41c4.114 2.47 6.545 7.162 5.549 11.131-.024.093-.05.181-.076.272l.002.001c2.062 2.538 1.5 5.258 1.236 4.745-1.072-2.086-3.066-1.568-4.088-1.043a6.803 6.803 0 0 1-.281.158l-.02.012-.002.002c-2.115 1.123-4.957 1.205-7.812-.022a12.568 12.568 0 0 1-5.64-4.838c.649.48 1.35.902 2.097 1.252 3.019 1.414 6.051 1.311 8.197-.002C9.651 12.73 7.101 9.67 5.146 7.191a10.628 10.628 0 0 1-1.005-1.384c2.34 2.142 6.038 4.83 7.365 5.576C8.69 8.408 6.208 4.743 6.324 4.86c4.436 4.47 8.528 6.996 8.528 6.996.154.085.27.154.36.213.085-.215.16-.437.224-.668.708-2.588-.09-5.548-1.893-7.992z" fill="#f17e4c" opacity="1"/></svg>
<div class="b" style="left:2844px;top:78px;width:180px;height:54px;background:#fff;"></div>
<div class="b" style="left:2830px;top:78px;width:12px;height:54px;background:linear-gradient(to right, rgba(0,0,0,0) 0%, rgba(0,0,0,0.035) 40%, rgba(0,0,0,0.15) 100%);"></div>
<div class="b" style="left:2842px;top:78px;width:2px;height:54px;background:#c3c3c3;"></div>
<svg class="b" style="left:2858px;top:90px;" width="28" height="30" viewBox="0 0 28 30"><g fill="none" stroke="#7d7d7d" stroke-width="2" stroke-linecap="round" stroke-linejoin="round"><path d="M7.4 8.9 L25.4 8.9 M19 2.6 L25.8 8.9 L19 15.2"/><path d="M20.4 21 L2.8 21 M9.2 14.7 L2.4 21 L9.2 27.3"/></g></svg>
<svg class="b" style="left:2905px;top:91px;" width="38" height="28" viewBox="0 0 38 28"><g stroke="#7d7d7d" stroke-width="2"><line x1="1.2" y1="2.7" x2="12.6" y2="2.7"/><line x1="1.2" y1="8.9" x2="16.6" y2="8.9"/><line x1="1.2" y1="15" x2="12.6" y2="15"/><line x1="1.2" y1="21" x2="16.6" y2="21"/><line x1="1.2" y1="27.2" x2="16.6" y2="27.2"/></g>
<rect x="22.2" y="2.3" width="13.8" height="23.6" fill="none" stroke="#7d7d7d" stroke-width="2"/><rect x="26.2" y="6.3" width="5.8" height="15.6" fill="none" stroke="#7d7d7d" stroke-width="1.8"/></svg>
<div class="b" style="left:2960px;top:93px;width:2px;height:24px;background:#e0e0e0;"></div>
<svg class="b" style="left:2980px;top:91.5px;" width="27" height="27" viewBox="0 0 27 27"><rect x="1.4" y="1.4" width="24.2" height="24.2" rx="4.6" fill="none" stroke="#6b6b6b" stroke-width="2"/><line x1="8.7" y1="1.4" x2="8.7" y2="25.6" stroke="#6b6b6b" stroke-width="2"/>
<path d="M17 8.6 L17 18.4 M12.1 13.5 L21.9 13.5" stroke="#6b6b6b" stroke-width="2" stroke-linecap="butt"/></svg>
<svg class="b" style="left:563.2px;top:147.64px;" width="25.0" height="25.5" viewBox="0 0 29.4 30"><rect x="0" y="0" width="29.4" height="30" rx="6.6" fill="#1d7ff9"/>
<rect x="2.5" y="2.6" width="24.4" height="24.8" rx="4.2" fill="#1a78f5" stroke="#fff" stroke-opacity="0.8" stroke-width="1.3"/>
<g stroke="#fff" stroke-width="2.1" stroke-linecap="round" fill="none"><line x1="13.2" y1="7.8" x2="22" y2="22.4"/><line x1="16.5" y1="7.6" x2="10.6" y2="17.6"/><line x1="8.9" y1="20.4" x2="7.8" y2="22.4"/><line x1="5.8" y1="18.7" x2="23.6" y2="18.7"/></g></svg>
<div class="t " style="left:601.00px;top:151.08px;font-size:22px;line-height:22px;color:#262626;letter-spacing:0.757px;-webkit-text-stroke:0.2px #262626;">TodoList</div>
<svg class="b" style="left:699.7px;top:151.9px;" width="9" height="19.4" viewBox="0 0 9 19.4"><path d="M2 1.3 L6.6 9.7 L2 18.099999999999998" fill="none" stroke="#858585" stroke-width="2.2" stroke-linecap="round" stroke-linejoin="round"/></svg>
<svg class="b" style="left:725.4px;top:150.30px;" width="25.0" height="19.4" viewBox="0 0 28.7 24" preserveAspectRatio="none"><path d="M0 3.4 Q0 0 3.4 0 L8.6 0 Q10.2 0 11.3 1.1 L12.3 2.1 Q13 2.7 14.2 2.7 L25.3 2.7 Q28.7 2.7 28.7 6 L28.7 6.9 L0 6.9 Z" fill="#8e9297"/>
<path d="M0 8.6 L28.7 8.6 L28.7 20.6 Q28.7 24 25.3 24 L3.4 24 Q0 24 0 20.6 Z" fill="#8e9297"/></svg>
<div class="t " style="left:763.20px;top:151.08px;font-size:22px;line-height:22px;color:#262626;letter-spacing:0.757px;-webkit-text-stroke:0.2px #262626;">TodoList</div>
<svg class="b" style="left:862px;top:151.9px;" width="9" height="19.4" viewBox="0 0 9 19.4"><path d="M2 1.3 L6.6 9.7 L2 18.099999999999998" fill="none" stroke="#858585" stroke-width="2.2" stroke-linecap="round" stroke-linejoin="round"/></svg>
<svg class="b" style="left:887.4px;top:150.30px;" width="25.0" height="19.4" viewBox="0 0 28.7 24" preserveAspectRatio="none"><path d="M0 3.4 Q0 0 3.4 0 L8.6 0 Q10.2 0 11.3 1.1 L12.3 2.1 Q13 2.7 14.2 2.7 L25.3 2.7 Q28.7 2.7 28.7 6 L28.7 6.9 L0 6.9 Z" fill="#8e9297"/>
<path d="M0 8.6 L28.7 8.6 L28.7 20.6 Q28.7 24 25.3 24 L3.4 24 Q0 24 0 20.6 Z" fill="#8e9297"/></svg>
<div class="t " style="left:924.70px;top:151.08px;font-size:22px;line-height:22px;color:#262626;letter-spacing:0.402px;-webkit-text-stroke:0.2px #262626;">Views</div>
<svg class="b" style="left:995.5px;top:151.9px;" width="9" height="19.4" viewBox="0 0 9 19.4"><path d="M2 1.3 L6.6 9.7 L2 18.099999999999998" fill="none" stroke="#858585" stroke-width="2.2" stroke-linecap="round" stroke-linejoin="round"/></svg>
<svg class="b" style="left:1021.4px;top:148.5px;" width="25.5" height="23.0" viewBox="2.35 3.35 18.4 16.6"><path d="M13.543 3.41c4.114 2.47 6.545 7.162 5.549 11.131-.024.093-.05.181-.076.272l.002.001c2.062 2.538 1.5 5.258 1.236 4.745-1.072-2.086-3.066-1.568-4.088-1.043a6.803 6.803 0 0 1-.281.158l-.02.012-.002.002c-2.115 1.123-4.957 1.205-7.812-.022a12.568 12.568 0 0 1-5.64-4.838c.649.48 1.35.902 2.097 1.252 3.019 1.414 6.051 1.311 8.197-.002C9.651 12.73 7.101 9.67 5.146 7.191a10.628 10.628 0 0 1-1.005-1.384c2.34 2.142 6.038 4.83 7.365 5.576C8.69 8.408 6.208 4.743 6.324 4.86c4.436 4.47 8.528 6.996 8.528 6.996.154.085.27.154.36.213.085-.215.16-.437.224-.668.708-2.588-.09-5.548-1.893-7.992z" fill="#f17e4c" opacity="1"/></svg>
<div class="t " style="left:1057.40px;top:151.08px;font-size:22px;line-height:22px;color:#262626;letter-spacing:0.637px;-webkit-text-stroke:0.2px #262626;">LandingView</div>
<svg class="b" style="left:1202px;top:151.9px;" width="9" height="19.4" viewBox="0 0 9 19.4"><path d="M2 1.3 L6.6 9.7 L2 18.099999999999998" fill="none" stroke="#858585" stroke-width="2.2" stroke-linecap="round" stroke-linejoin="round"/></svg>
<div class="b" style="left:1226px;top:145.9px;width:28px;height:28px;border-radius:6.5px;background:#52bad4;"></div>
<div class="t " style="left:1233.60px;top:148.67px;font-size:22.6px;line-height:22.6px;color:#fff;-webkit-text-stroke:0.5px #fff;transform:scaleX(0.86);transform-origin:left center;">P</div>
<div class="t " style="left:1264.00px;top:151.08px;font-size:22px;line-height:22px;color:#262626;letter-spacing:0.956px;-webkit-text-stroke:0.2px #262626;">todos</div>
<div class="b" style="left:546px;top:1104px;width:2478px;height:38px;background:#edf4fe;"></div>
<div class="b" style="left:933.8px;top:1104.5px;width:89.8px;height:37px;background:#e7ebf7;border-radius:7px;"></div>
<div class="b" style="left:1055.9px;top:1408px;width:88.3px;height:37.5px;background:#eaeef9;border-radius:7px;"></div>
<div class="b" style="left:640px;top:194px;width:14px;height:223.5px;background:#e8e8e8;border-top-left-radius:7px;border-top-right-radius:7px;border-bottom-left-radius:7px;border-bottom-right-radius:7px;"></div>
<div class="b" style="left:640px;top:574px;width:14px;height:1258px;background:#e8e8e8;border-top-left-radius:7px;border-top-right-radius:7px;"></div>
<div class="b" style="left:640px;top:1216.5px;width:14px;height:16px;background:rgba(255,255,255,0.55);border-top-left-radius:7px 8px;border-top-right-radius:7px 8px;"></div>
<div class="b" style="left:640px;top:1218px;width:14px;height:614px;background:#d2d2d2;border-top-left-radius:7px;border-top-right-radius:7px;"></div>
<div class="b" style="left:640px;top:1254.5px;width:14px;height:16px;background:rgba(255,255,255,0.55);border-top-left-radius:7px 8px;border-top-right-radius:7px 8px;"></div>
<div class="b" style="left:640px;top:1256px;width:14px;height:576px;background:#c0c0c0;border-top-left-radius:7px;border-top-right-radius:7px;"></div>
<div class="b" style="left:640px;top:1330.5px;width:14px;height:16px;background:rgba(255,255,255,0.55);border-top-left-radius:7px 8px;border-top-right-radius:7px 8px;"></div>
<div class="b" style="left:640px;top:1332px;width:14px;height:500px;background:#adadad;border-top-left-radius:7px;border-top-right-radius:7px;"></div>
<div class="b" style="left:640px;top:1406.5px;width:14px;height:16px;background:rgba(255,255,255,0.55);border-top-left-radius:7px 8px;border-top-right-radius:7px 8px;"></div>
<div class="b" style="left:640px;top:1408px;width:14px;height:424px;background:#9c9c9c;border-top-left-radius:7px;border-top-right-radius:7px;"></div>
<div class="b" style="left:640px;top:1558.5px;width:14px;height:16px;background:rgba(255,255,255,0.55);border-top-left-radius:7px 8px;border-top-right-radius:7px 8px;"></div>
<div class="b" style="left:640px;top:1560px;width:14px;height:272px;background:#919191;border-top-left-radius:7px;border-top-right-radius:7px;"></div>
<div class="b" style="left:640px;top:1596.5px;width:14px;height:16px;background:rgba(255,255,255,0.55);border-top-left-radius:7px 8px;border-top-right-radius:7px 8px;"></div>
<div class="b" style="left:640px;top:1598px;width:14px;height:234px;background:#868686;border-top-left-radius:7px;border-top-right-radius:7px;"></div>
<div class="b" style="left:640px;top:1710.5px;width:14px;height:115.2px;background:#c4c4c4;border-radius:7px / 8px;"></div>
<div class="b" style="left:640px;top:1712px;width:14px;height:112px;background:#777777;border-radius:7px;"></div>
<div class="b" style="left:640px;top:1104px;width:14px;height:38px;background:#dde2ea;"></div>
<div class="ln" style="top:193.6px;">1</div>
<div class="code" style="top:193.3px"><span class="c">//</span></div>
<div class="ln" style="top:231.6px;">2</div>
<div class="code" style="top:231.3px"><span class="c">//  LandingView.swift</span></div>
<div class="ln" style="top:269.6px;">3</div>
<div class="code" style="top:269.3px"><span class="c">//  TodoList</span></div>
<div class="ln" style="top:307.6px;">4</div>
<div class="code" style="top:307.3px"><span class="c">//</span></div>
<div class="ln" style="top:345.6px;">5</div>
<div class="code" style="top:345.3px"><span class="c">//  Created by Russell Gordon on 2024-04-08.</span></div>
<div class="ln" style="top:383.6px;">6</div>
<div class="code" style="top:383.3px"><span class="c">//</span></div>
<div class="ln" style="top:421.6px;">7</div>
<div class="ln" style="top:459.6px;">8</div>
<div class="code" style="top:459.3px"><span class="k">import</span> SwiftData</div>
<div class="ln" style="top:497.6px;">9</div>
<div class="code" style="top:497.3px"><span class="k">import</span> SwiftUI</div>
<div class="ln" style="top:535.6px;">10</div>
<div class="ln" style="top:573.6px;">11</div>
<div class="code" style="top:573.3px"><span class="k">struct</span> <span class="td">LandingView</span>: <span class="st">View</span> {</div>
<div class="ln" style="top:611.6px;">12</div>
<div class="ln" style="top:649.6px;">13</div>
<div class="code" style="top:649.3px">    <span class="c">// </span><span class="m">MARK: Stored properties</span></div>
<div class="ln" style="top:687.6px;">14</div>
<div class="ln" style="top:725.6px;">15</div>
<div class="code" style="top:725.3px">    <span class="c">// The item currently being added</span></div>
<div class="ln" style="top:763.6px;">16</div>
<div class="code" style="top:763.3px">    <span class="st">@State</span> <span class="k">var</span> <span class="d">newItemDescription</span> = <span class="s">&quot;&quot;</span></div>
<div class="ln" style="top:801.6px;">17</div>
<div class="ln" style="top:839.6px;">18</div>
<div class="code" style="top:839.3px">    <span class="c">// The search text</span></div>
<div class="ln" style="top:877.6px;">19</div>
<div class="code" style="top:877.3px">    <span class="st">@State</span> <span class="k">var</span> <span class="d">searchText</span> = <span class="s">&quot;&quot;</span></div>
<div class="ln" style="top:915.6px;">20</div>
<div class="ln" style="top:953.6px;">21</div>
<div class="code" style="top:953.3px">    <span class="c">// Access the model context (required to do additions, deletions, updates, et cetera)</span></div>
<div class="ln" style="top:991.6px;">22</div>
<div class="code" style="top:991.3px">    <span class="st">@Environment</span>(\.<span class="sf">modelContext</span>) <span class="k">var</span> <span class="d">modelContext</span></div>
<div class="ln" style="top:1029.6px;">23</div>
<div class="ln" style="top:1067.6px;">24</div>
<div class="code" style="top:1067.3px">    <span class="c">// The list of to-do items</span></div>
<div class="ln" style="top:1105.6px;color:#1f1f1f;">25</div>
<div class="code" style="top:1105.3px">    <span class="st">@State</span> <span class="k">var</span> <span class="d">todos</span>: [<span class="pt">TodoItem</span>] = <span class="pf">exampleItems</span></div>
<div class="ln" style="top:1143.6px;">26</div>
<div class="ln" style="top:1181.6px;">27</div>
<div class="code" style="top:1181.3px">    <span class="c">// </span><span class="m">MARK: Computed properties</span></div>
<div class="ln" style="top:1219.6px;">28</div>
<div class="code" style="top:1219.3px">    <span class="k">var</span> <span class="d">body</span>: <span class="k">some</span> <span class="st">View</span> {</div>
<div class="ln" style="top:1257.6px;">29</div>
<div class="code" style="top:1257.3px">        <span class="st">NavigationView</span> {</div>
<div class="ln" style="top:1295.6px;">30</div>
<div class="ln" style="top:1333.6px;">31</div>
<div class="code" style="top:1333.3px">            <span class="st">VStack</span> {</div>
<div class="ln" style="top:1371.6px;">32</div>
<div class="ln" style="top:1409.6px;">33</div>
<div class="code" style="top:1409.3px">                <span class="st">List</span>(<span class="pf">$todos</span>) { $todo <span class="k">in</span></div>
<div class="ln" style="top:1447.6px;">34</div>
<div class="ln" style="top:1485.6px;">35</div>
<div class="code" style="top:1485.3px">                    <span class="pt">ItemView</span>(<span class="pf">currentItem</span>: $todo)</div>
<div class="ln" style="top:1523.6px;">36</div>
<div class="code" style="top:1523.3px">                        <span class="c">// Delete a to-do item</span></div>
<div class="ln" style="top:1561.6px;">37</div>
<div class="code" style="top:1561.3px">                        .<span class="sf">swipeActions</span> {</div>
<div class="ln" style="top:1599.6px;">38</div>
<div class="code" style="top:1599.3px">                            <span class="st">Button</span>(</div>
<div class="ln" style="top:1637.6px;">39</div>
<div class="code" style="top:1637.3px">                                <span class="s">&quot;Delete&quot;</span>,</div>
<div class="ln" style="top:1675.6px;">40</div>
<div class="code" style="top:1675.3px">                                <span class="sf">role</span>: .<span class="sf">destructive</span>,</div>
<div class="ln" style="top:1713.6px;">41</div>
<div class="code" style="top:1713.3px">                                <span class="sf">action</span>: {</div>
<div class="ln" style="top:1751.6px;">42</div>
<div class="code" style="top:1751.3px">                                    <span class="pf">delete</span>(todo)</div>
<div class="ln" style="top:1789.6px;">43</div>
<div class="code" style="top:1789.3px">                                }</div>
<svg class="b" style="left:567px;top:1850px;" width="34" height="22" viewBox="567 1850 34 22"><path d="M572.4 1851.9 L589.8 1851.9 Q591.8 1851.9 593 1853.5 L597.6 1859.4 Q598.8 1861 597.6 1862.6 L593 1868.5 Q591.8 1870.1 589.8 1870.1 L572.4 1870.1 Q569 1870.1 569 1866.7 L569 1855.3 Q569 1851.9 572.4 1851.9 Z" fill="#3478f6"/></svg>
<div class="t " style="left:2760.00px;top:1850.78px;font-size:22px;line-height:22px;color:#7e7e7e;letter-spacing:0.893px;-webkit-text-stroke:0.4px #7e7e7e;">Line: 25  Col: 18</div>
<div class="b" style="left:2954px;top:1849px;width:2px;height:24px;background:#dedede;"></div>
<svg class="b" style="left:2971px;top:1846px;" width="30" height="30" viewBox="2971 1846 30 30"><rect x="2974.1" y="1849.1" width="23.8" height="23.6" rx="5.2" fill="none" stroke="#7a7a7a" stroke-width="2.1"/><rect x="2977.2" y="1863.8" width="17.6" height="6.2" rx="1.8" fill="#7a7a7a"/></svg>
</div></body></html>
